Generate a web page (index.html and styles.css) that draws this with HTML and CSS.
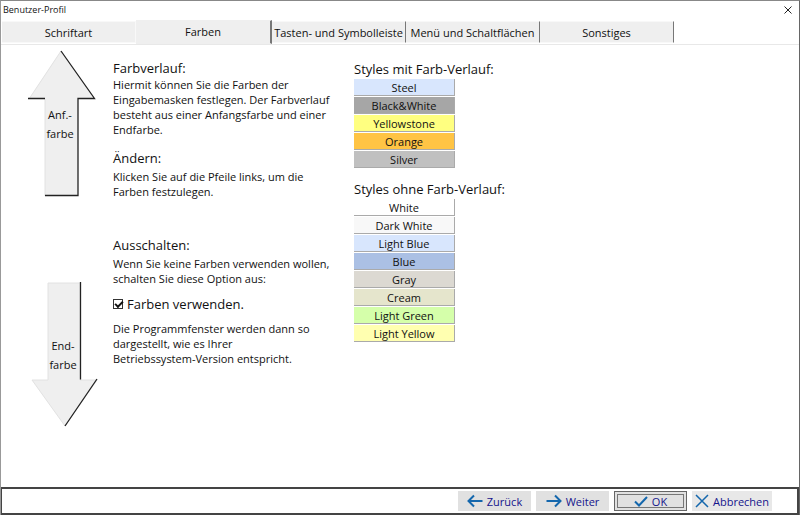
FILE: index.html
```
<!DOCTYPE html>
<html lang="de">
<head>
  <meta charset="UTF-8" />
  <meta name="viewport" content="width=device-width, initial-scale=1.0"/>
  <title>Benutzer-Profil</title>
  <link rel="stylesheet" href="styles.css">
</head>
<body>

  <div class="window">

    <header class="titlebar">
      <h1 class="window-title">Benutzer-Profil</h1>
      <button class="close" type="button" aria-label="Schließen">
        <svg width="8" height="8" viewBox="0 0 8 8"><path d="M0.5 0.5L7.5 7.5M7.5 0.5L0.5 7.5" stroke="#222" fill="none"/></svg>
      </button>
    </header>

    <!-- Tabs -->
    <nav class="tabs" role="tablist">
      <button class="tab" type="button" role="tab">Schriftart</button>
      <button class="tab active" type="button" role="tab" aria-selected="true">Farben</button>
      <button class="tab" type="button" role="tab">Tasten- und Symbolleiste</button>
      <button class="tab" type="button" role="tab">Menü und Schaltflächen</button>
      <button class="tab" type="button" role="tab">Sonstiges</button>
    </nav>

    <main class="content">

      <!-- Start and end colour -->
      <div class="arrows">
        <button class="arrow arrow-up" type="button">
          <svg width="68" height="148" viewBox="0 0 68 148">
            <path d="M33 1L67 49H50V146H17V49H1Z" fill="#efefef"/>
            <path d="M33 1L1 49M17 49V146" fill="none" stroke="#e2e2e2"/>
            <path d="M33 1L66.5 48.5H50V145.5H17M0 48.5H17" fill="none" stroke="#222" stroke-width="1.3"/>
          </svg>
          <span class="arrow-text">Anf.-<br>farbe</span>
        </button>
        <button class="arrow arrow-down" type="button">
          <svg width="68" height="146" viewBox="0 0 68 146">
            <path d="M17 1H49V98H66L34 144L1 98H17Z" fill="#efefef" stroke="#e2e2e2"/>
            <path d="M49.5 0V97.5M66 97L34 144" fill="none" stroke="#222" stroke-width="1.3"/>
          </svg>
          <span class="arrow-text">End-<br>farbe</span>
        </button>
      </div>

      <div class="info">
        <section class="gradient">
          <h2>Farbverlauf:</h2>
          <p>Hiermit können Sie die Farben der<br>Eingabemasken festlegen. Der Farbverlauf<br>besteht aus einer Anfangsfarbe und einer<br>Endfarbe.</p>
        </section>
        <section class="change">
          <h2>Ändern:</h2>
          <p>Klicken Sie auf die Pfeile links, um die<br>Farben festzulegen.</p>
        </section>
        <section class="switch-off">
          <h2>Ausschalten:</h2>
          <p>Wenn Sie keine Farben verwenden wollen,<br>schalten Sie diese Option aus:</p>
          <label class="use-colors" for="useColors">
            <input type="checkbox" id="useColors" checked>
            Farben verwenden.
          </label>
          <p>Die Programmfenster werden dann so<br>dargestellt, wie es Ihrer<br>Betriebssystem-Version entspricht.</p>
        </section>
      </div>

      <!-- Predefined styles -->
      <div class="styles">
        <section class="style-group">
          <h2>Styles mit Farb-Verlauf:</h2>
          <button class="style steel" type="button">Steel</button>
          <button class="style black-white" type="button">Black&amp;White</button>
          <button class="style yellowstone" type="button">Yellowstone</button>
          <button class="style orange" type="button">Orange</button>
          <button class="style silver" type="button">Silver</button>
        </section>
        <section class="style-group">
          <h2>Styles ohne Farb-Verlauf:</h2>
          <button class="style white" type="button">White</button>
          <button class="style dark-white" type="button">Dark White</button>
          <button class="style light-blue" type="button">Light Blue</button>
          <button class="style blue" type="button">Blue</button>
          <button class="style gray" type="button">Gray</button>
          <button class="style cream" type="button">Cream</button>
          <button class="style light-green" type="button">Light Green</button>
          <button class="style light-yellow" type="button">Light Yellow</button>
        </section>
      </div>

    </main>

    <footer class="footer">
      <button class="action" type="button">
        <svg width="16" height="14" viewBox="0 0 16 14"><path d="M15.5 7H1.5M7 1.5L1.5 7L7 12.5"/></svg>
        Zurück
      </button>
      <button class="action" type="button">
        <svg width="16" height="14" viewBox="0 0 16 14"><path d="M0.5 7H14.5M9 1.5L14.5 7L9 12.5"/></svg>
        Weiter
      </button>
      <button class="action default" type="button">
        <svg width="14" height="14" viewBox="0 0 14 14"><path d="M1 7.5L5 11.5L13 3"/></svg>
        OK
      </button>
      <button class="action cancel" type="button">
        <svg width="14" height="14" viewBox="0 0 14 14"><path d="M1 1L13 13M13 1L1 13"/></svg>
        Abbrechen
      </button>
    </footer>

  </div>

</body>
</html>
```
FILE: styles.css
```
* {
  box-sizing: border-box;
}

body {
  margin: 0;
  background-color: #fff;
  color: #111;
  font-family: "Open Sans", "Noto Sans", sans-serif;
  font-size: 11px;
  line-height: 15px;
}

button {
  margin: 0;
  padding: 0;
  border: 0;
  background: none;
  color: inherit;
  font: inherit;
  white-space: nowrap;
}

h1, h2, p {
  margin: 0;
  font-weight: normal;
  white-space: nowrap;
}

h2 {
  font-size: 13px;
  line-height: 18px;
}

.window {
  display: flex;
  flex-direction: column;
  min-height: 100vh;
  border-top: 1px solid #888;
  border-left: 1px solid #999;
  border-right: 1px solid #666;
}

.titlebar {
  display: flex;
  justify-content: space-between;
  align-items: center;
  height: 19px;
  padding: 0 7px 2px 2px;
}

.window-title {
  font-size: 9px;
}

.close {
  display: flex;
}

/* Tabs */
.tabs {
  display: flex;
  align-items: center;
  height: 25px;
  padding-left: 1px;
  border-bottom: 1px solid #e8e8e8;
}

.tab {
  width: 134px;
  height: 22px;
  border: 1px solid #f8f8f8;
  border-left-width: 0;
  border-right: 1px solid #777;
  background-color: #efefef;
}

.tab:first-child {
  border-right-color: #f8f8f8;
}

.tab.active {
  height: 24px;
  width: 136px;
  padding-bottom: 2px;
  border-color: #efefef;
  border-right: 2px solid #777;
}

/* Content */
.content {
  display: flex;
  flex: 1;
  align-items: flex-start;
  gap: 14px;
  padding: 5px 27px 0;
}

.arrows {
  display: flex;
  flex-direction: column;
  gap: 84px;
  width: 71px;
}

.arrow {
  display: grid;
  place-items: center;
}

.arrow svg,
.arrow-text {
  grid-area: 1 / 1;
}

.arrow-up {
  align-self: flex-start;
}

.arrow-down {
  align-self: flex-end;
}

.arrow-text {
  padding-right: 4px;
  line-height: 19px;
}

.info {
  width: 227px;
  padding-top: 10px;
}

.gradient h2 {
  line-height: 17px;
}

.change {
  margin-top: 12px;
}

.change h2,
.switch-off h2 {
  margin-bottom: 2px;
}

.switch-off {
  margin-top: 37px;
}

.use-colors {
  display: flex;
  align-items: center;
  gap: 4px;
  margin: 9px 0 8px;
  font-size: 13px;
  line-height: 18px;
}

.use-colors input {
  appearance: none;
  width: 10px;
  height: 10px;
  margin: 0;
  border: 1px solid #333;
  background-color: #fff;
}

.use-colors input:checked::before {
  content: "";
  display: block;
  width: 6px;
  height: 3px;
  margin: 1px;
  border: solid #111;
  border-width: 0 0 2px 2px;
  transform: rotate(-45deg);
}

/* Style buttons */
.styles {
  padding-top: 10px;
}

.style-group {
  display: flex;
  flex-direction: column;
  align-items: flex-start;
}

.style-group + .style-group {
  margin-top: 11px;
}

.style-group h2 {
  margin-bottom: 1px;
}

.style {
  width: 101px;
  height: 17px;
  margin-bottom: 1px;
  border-right: 1px solid #aaa;
  border-bottom: 1px solid #aaa;
}

.steel { background-color: #d8e6fd; }
.black-white { background-color: #a6a6a6; }
.yellowstone { background-color: #ffff80; }
.orange { background-color: #ffc444; }
.silver { background-color: #c0c0c0; }
.white { background-color: #fff; }
.dark-white { background-color: #f8f8f8; }
.light-blue { background-color: #d8e6fd; }
.blue { background-color: #abc0e4; }
.gray { background-color: #dcd9d2; }
.cream { background-color: #e5e5cc; }
.light-green { background-color: #d5ffaa; }
.light-yellow { background-color: #ffffb0; }

/* Footer */
.footer {
  display: flex;
  justify-content: flex-end;
  align-items: center;
  gap: 5px;
  height: 28px;
  padding-right: 25px;
  border: 2px solid #444;
  border-left-width: 1px;
}

.action {
  display: flex;
  justify-content: center;
  align-items: center;
  gap: 4px;
  width: 73px;
  height: 20px;
  background-color: #e1e1e1;
  color: #14148c;
}

.action svg {
  fill: none;
  stroke: #1467ad;
  stroke-width: 2;
}

.default {
  border: 1px solid #666;
  outline: 1px solid #777;
  outline-offset: -4px;
}

.cancel {
  width: 80px;
  background-color: #e8e8e8;
}

.cancel svg {
  stroke-width: 1.5;
}
```
